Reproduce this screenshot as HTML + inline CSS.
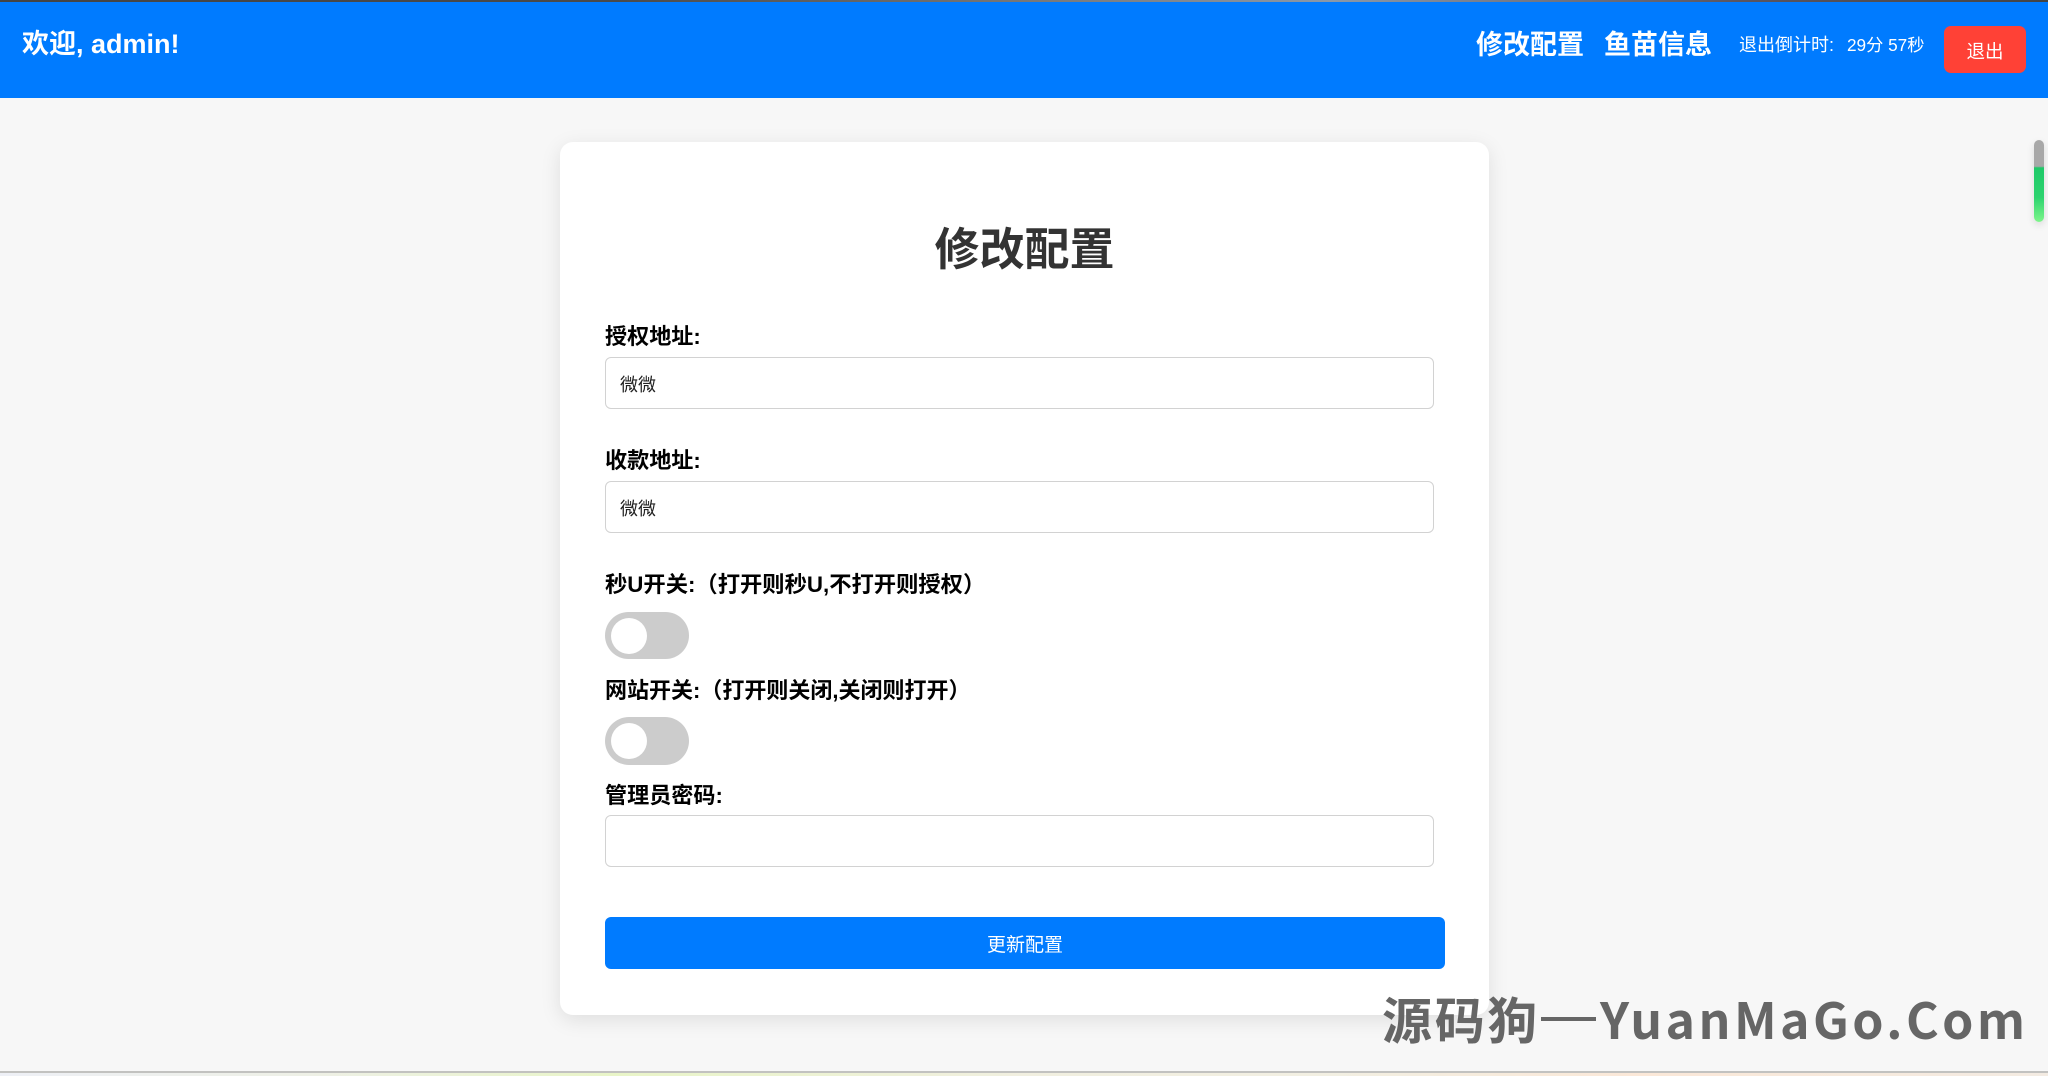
<!DOCTYPE html>
<html lang="zh-CN">
<head>
<meta charset="utf-8">
<title>修改配置</title>
<style>
html,body{margin:0;padding:0;width:2048px;height:1076px;overflow:hidden;background:#f7f7f7;}
body{position:relative;font-family:"Liberation Sans","Noto Sans CJK SC",sans-serif;color:#000;}
.a{position:absolute;white-space:nowrap;}
#strip{left:0;top:0;width:2048px;height:2px;background:linear-gradient(90deg,#444 0,#4a4a4a 30%,#777 50%,#8a98a8 65%,#5a5560 85%,#444 100%);z-index:3;}
#hdr{left:0;top:2px;width:2048px;height:95.5px;background:#007bff;}
.w{color:#fff;}
#card{left:560px;top:142px;width:929px;height:873px;background:#fff;border-radius:13px;box-shadow:0 5px 20px rgba(0,0,0,.1);}
.lab{left:605px;font-size:22.1px;font-weight:700;line-height:30px;height:30px;color:#000;}
.inp{left:605px;width:827px;height:50px;border:1px solid #d2d2d2;border-radius:6px;background:#fff;}
.val{left:620px;font-size:18px;line-height:26px;color:#222;}
.tog{left:605px;width:84px;height:47px;border-radius:24px;background:#ccc;}
.kn{left:610.5px;width:36px;height:36px;border-radius:50%;background:#fff;}
#btn{left:605px;top:917px;width:840px;height:52px;background:#007bff;border-radius:6px;color:#fff;font-size:19px;line-height:58px;text-align:center;}
.wm{top:983px;font-family:"Noto Sans CJK SC",sans-serif;font-weight:700;font-size:50px;line-height:70px;color:#666;}
#line{left:0;top:1071px;width:2048px;height:2px;background:#c2c2c0;}
#foot{left:0;top:1073px;width:2048px;height:3px;background:linear-gradient(90deg,#eef0f6 0,#eef0e6 15%,#e9f5c8 30%,#f1efe0 50%,#f2efe2 65%,#fbe8d8 80%,#f3ebe2 100%);}
#sb1{left:2034px;top:140px;width:10px;height:82px;border-radius:5px;background:linear-gradient(180deg,#a8a8a8 0,#a8a8a8 32%,#1ec968 34%,#2dd36f 70%,#7df58a 100%);box-shadow:0 3px 8px rgba(0,0,0,.12);}
</style>
</head>
<body>
<div class="a" id="strip"></div>
<div class="a" id="hdr"></div>
<div class="a w" style="left:22px;top:24px;font-size:27px;font-weight:700;line-height:40px;">欢迎, admin!</div>
<div class="a w" style="left:1476px;top:25px;font-size:27px;font-weight:700;line-height:40px;">修改配置</div>
<div class="a w" style="left:1604px;top:25px;font-size:27px;font-weight:700;line-height:40px;">鱼苗信息</div>
<div class="a w" style="left:1739px;top:31px;font-size:18px;line-height:28px;">退出倒计时:</div>
<div class="a w" style="left:1847px;top:31px;font-size:17.2px;line-height:28px;">29分 57秒</div>
<div class="a" style="left:1944px;top:26px;width:82px;height:47px;background:#ff4136;border-radius:7px;color:#fff;font-size:18.5px;line-height:52px;text-align:center;">退出</div>

<div class="a" id="card"></div>
<div class="a" style="left:560px;top:218px;width:929px;text-align:center;font-size:45px;font-weight:700;line-height:64px;color:#333;">修改配置</div>

<div class="a lab" style="top:322px;">授权地址:</div>
<div class="a inp" style="top:357px;"></div>
<div class="a val" style="top:372px;">微微</div>

<div class="a lab" style="top:446px;">收款地址:</div>
<div class="a inp" style="top:481px;"></div>
<div class="a val" style="top:496px;">微微</div>

<div class="a lab" style="top:570px;font-size:22.3px;">秒U开关:（打开则秒U,不打开则授权）</div>
<div class="a tog" style="top:612px;"></div>
<div class="a kn" style="top:618px;"></div>

<div class="a lab" style="top:676px;font-size:22px;">网站开关:（打开则关闭,关闭则打开）</div>
<div class="a tog" style="top:717px;height:48px;"></div>
<div class="a kn" style="top:723px;"></div>

<div class="a lab" style="top:781px;">管理员密码:</div>
<div class="a inp" style="top:815px;"></div>

<div class="a" id="btn">更新配置</div>

<div class="a" id="sb1"></div>
<div class="a wm" style="left:1382px;letter-spacing:2.7px;">源码狗</div>
<div class="a" style="left:1541px;top:1017px;width:55px;height:4px;background:#666;"></div>
<div class="a wm" style="left:1600px;letter-spacing:3.4px;">YuanMaGo.Com</div>
<div class="a" id="line"></div>
<div class="a" id="foot"></div>
</body>
</html>
